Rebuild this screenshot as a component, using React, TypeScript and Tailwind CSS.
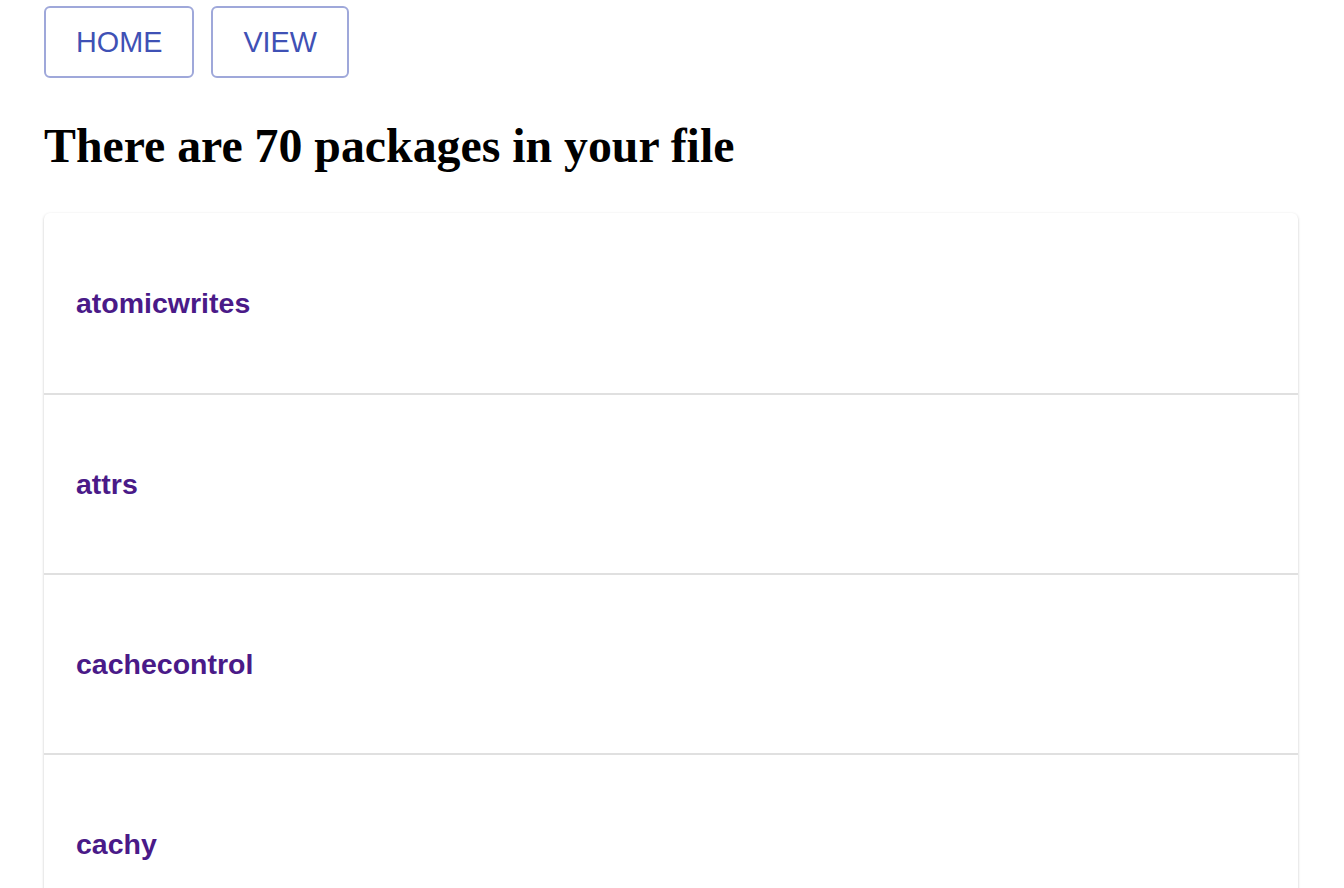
import React from 'react';

const packages = ['atomicwrites', 'attrs', 'cachecontrol', 'cachy', 'certifi', 'chardet'];

const App: React.FC = () => {
  return (
    <div className="min-h-screen bg-white pl-[44px] pr-[46px] pt-[6px]" style={{ fontFamily: '"Liberation Sans", Arial, sans-serif' }}>
      <div className="flex gap-[17px]">
        <button className="h-[72px] px-[30px] rounded-[6px] border-2 border-[#9fa8da] text-[#3f51b5] text-[28.8px] leading-none">
          HOME
        </button>
        <button className="h-[72px] px-[30px] rounded-[6px] border-2 border-[#9fa8da] text-[#3f51b5] text-[28.8px] leading-none">
          VIEW
        </button>
      </div>

      <h1 className="mt-[41px] mb-[39px] text-[47.8px] font-bold leading-[1.15] text-black" style={{ fontFamily: '"Liberation Serif", "Times New Roman", serif' }}>
        There are 70 packages in your file
      </h1>

      <div className="rounded-[6px] bg-white shadow-[0_1px_3px_rgba(0,0,0,0.2),0_1px_1px_rgba(0,0,0,0.08)] overflow-hidden">
        {packages.map((name, i) => (
          <div
            key={name}
            className={`h-[180px] flex items-center px-[32px] ${i > 0 ? 'border-t-2 border-[#e0e0e0]' : ''}`}
          >
            <span className="text-[28.5px] font-bold text-[#4a1a88]">{name}</span>
          </div>
        ))}
      </div>
    </div>
  );
};

export default App;
